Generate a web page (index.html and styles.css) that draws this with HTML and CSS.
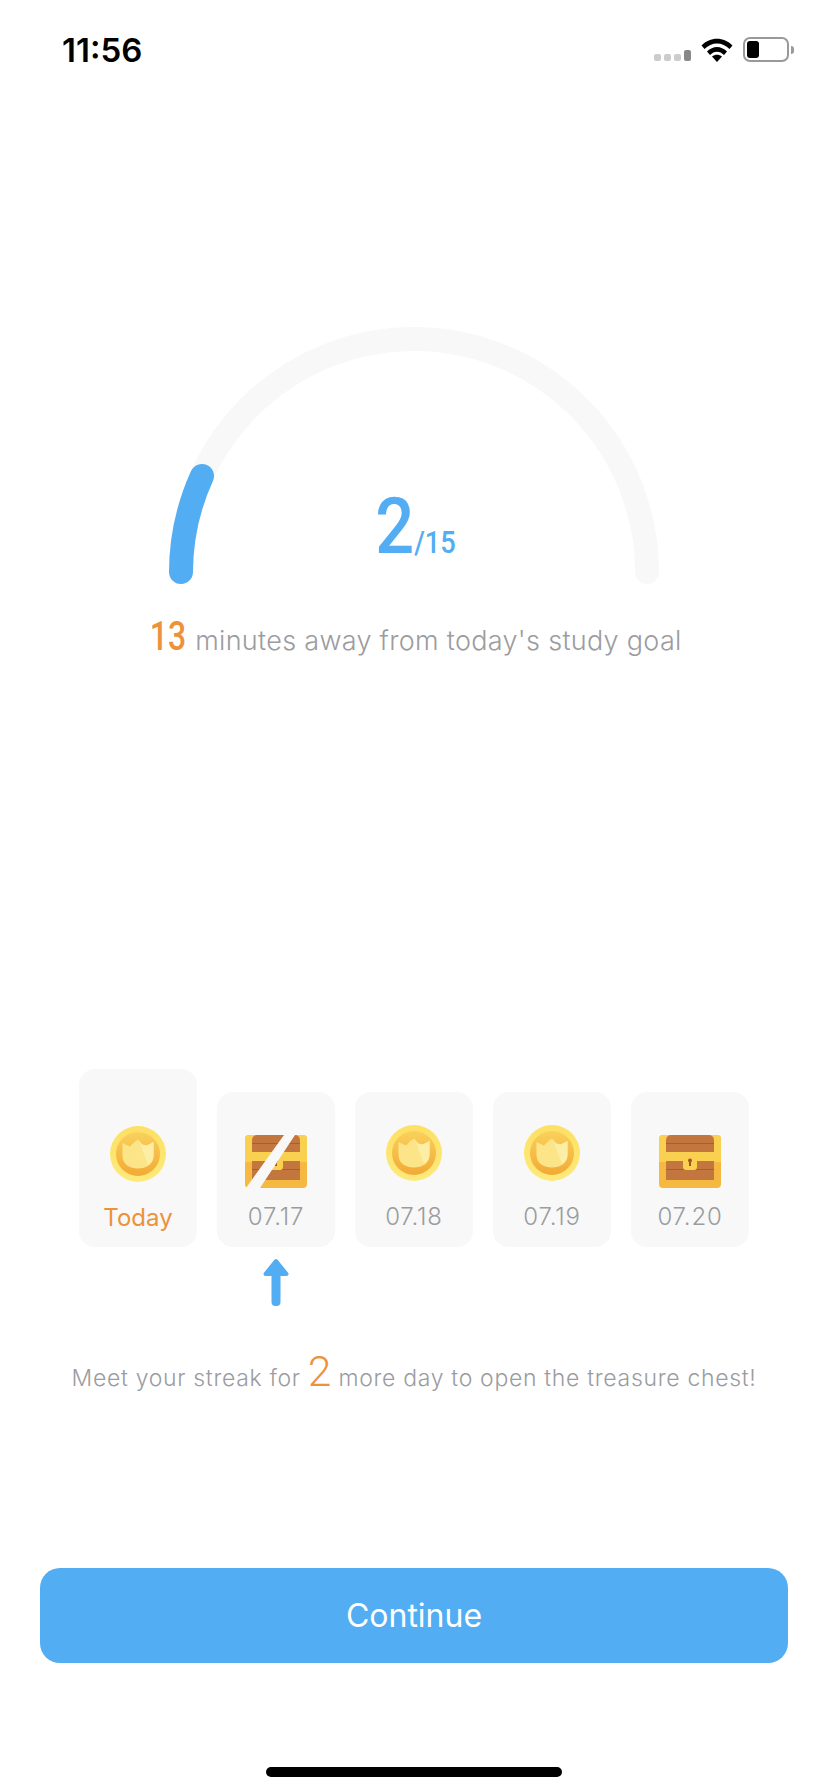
FILE: index.html
```html
<!DOCTYPE html>
<html lang="en">
<head>
    <meta charset="UTF-8">
    <meta name="viewport" content="width=device-width, initial-scale=1.0">
    <title>Study Goal</title>
    <link rel="stylesheet" href="styles.css">
</head>
<body>

    <svg class="defs" width="0" height="0">
        <defs>
            <linearGradient id="coinRim" x1="0" y1="0" x2="0" y2="1">
                <stop offset="0" stop-color="#fde063"/>
                <stop offset="1" stop-color="#fdea7c"/>
            </linearGradient>
            <linearGradient id="coinFace" x1="0" y1="0" x2="0" y2="1">
                <stop offset="0" stop-color="#f9d15c"/>
                <stop offset="1" stop-color="#f3a935"/>
            </linearGradient>
            <symbol id="coin" viewBox="0 0 56 56">
                <circle cx="28" cy="28" r="28" fill="url(#coinRim)"/>
                <circle cx="28" cy="28" r="22" fill="url(#coinFace)"/>
                <path d="M12.5 17 L20 20.5 L24 16.5 L28 13.5 L32 18.5 L37 19.5 L43.5 16 L43.5 30 C43.5 38.5 36 42.5 28 42.5 C20 42.5 12.5 38.5 12.5 30 Z" fill="#fbe588"/>
                <path d="M29 14.5 L32 18.5 L37 19.5 L43.5 16 L43.5 30 C43.5 34 41 37 38 39 Z" fill="#fdeea6"/>
            </symbol>
            <symbol id="chest" viewBox="0 0 62 53">
                <rect width="62" height="53" rx="4" fill="#f5b840"/>
                <path d="M0 4 a4 4 0 0 1 4 -4 H58 a4 4 0 0 1 4 4 V27 H0 Z" fill="#f9d04f"/>
                <path d="M7 17 V5 a5 5 0 0 1 5 -5 H50 a5 5 0 0 1 5 5 V17 Z" fill="#c4763f"/>
                <rect x="7" y="26" width="48" height="19" fill="#c4763f"/>
                <rect x="7" y="8" width="48" height="1" fill="#a5602f"/>
                <rect x="7" y="34" width="48" height="1" fill="#a5602f"/>
                <rect x="24" y="22" width="14" height="13" rx="3" fill="#f9d04f"/>
                <circle cx="31" cy="25.5" r="2" fill="#a5542a"/>
                <rect x="30" y="26" width="2" height="5" fill="#a5542a"/>
            </symbol>
        </defs>
    </svg>

    <div class="page">
        <div class="status-bar">
            <span class="clock">11:56</span>
            <div class="status-icons">
                <div class="signal">
                    <i></i><i></i><i></i><i class="on"></i>
                </div>
                <svg class="wifi" width="32" height="24" viewBox="0 0 32 24">
                    <path d="M0.5 7.5 C9 -1.5 23 -1.5 31.5 7.5 L28.5 11 C21.5 3.5 10.5 3.5 3.5 11 Z" fill="#000"/>
                    <path d="M6 13.5 C12 7.5 20 7.5 26 13.5 L23 17 C19 12.5 13 12.5 9 17 Z" fill="#000"/>
                    <path d="M11 18.5 C14 16 18 16 21 18.5 L16 24 Z" fill="#000"/>
                </svg>
                <div class="battery">
                    <div class="battery-body"><div class="battery-level"></div></div>
                    <div class="battery-cap"></div>
                </div>
            </div>
        </div>

        <div class="gauge">
            <svg class="gauge-arc" width="490" height="264" viewBox="0 0 490 264">
                <path class="track" d="M12 251 A233 233 0 0 1 478 251"/>
                <path class="fill" d="M12 251 A233 233 0 0 1 33 155"/>
            </svg>
            <div class="gauge-count"><span class="count-now">2</span><span class="count-total">/15</span></div>
        </div>

        <p class="goal"><span class="goal-num">13</span> minutes away from today's study goal</p>

        <div class="days">
            <div class="day today">
                <svg class="coin"><use href="#coin"/></svg>
                <span class="day-label">Today</span>
            </div>
            <div class="day">
                <svg class="chest" viewBox="0 0 62 53">
                    <use href="#chest" width="62" height="53"/>
                    <polygon points="39,0 50,0 15,53 1,53" fill="#f8f8f8"/>
                </svg>
                <span class="day-label">07.17</span>
            </div>
            <div class="day">
                <svg class="coin"><use href="#coin"/></svg>
                <span class="day-label">07.18</span>
            </div>
            <div class="day">
                <svg class="coin"><use href="#coin"/></svg>
                <span class="day-label">07.19</span>
            </div>
            <div class="day">
                <svg class="chest" viewBox="0 0 62 53"><use href="#chest" width="62" height="53"/></svg>
                <span class="day-label">07.20</span>
            </div>
        </div>

        <div class="pointer">
            <svg width="26" height="48" viewBox="0 0 26 48">
                <path d="M13 3 L23.5 16 H2.5 Z" fill="#52adf3" stroke="#52adf3" stroke-width="4" stroke-linejoin="round"/>
                <rect x="8.5" y="14" width="9" height="34" rx="4" fill="#52adf3"/>
            </svg>
        </div>

        <p class="streak">Meet your streak for <span class="streak-num">2</span> more day to open the treasure chest!</p>

        <button class="continue">Continue</button>

        <div class="home-bar"></div>
    </div>

</body>
</html>
```

FILE: styles.css
```css
* {
    box-sizing: border-box;
}

body {
    margin: 0;
    background: #fff;
    font-family: Inter, "Noto Sans", sans-serif;
}

.defs {
    position: absolute;
}

.page {
    width: 828px;
    height: 1792px;
    display: flex;
    flex-direction: column;
    align-items: center;
}

.status-bar {
    width: 100%;
    height: 100px;
    padding: 30px 34px 0 62px;
    display: flex;
    justify-content: space-between;
    align-items: flex-start;
}

.clock {
    font-size: 33px;
    line-height: 40px;
    font-weight: 600;
    color: #000;
}

.status-icons {
    display: flex;
    align-items: flex-end;
    padding-top: 7px;
}

.signal {
    display: flex;
    align-items: flex-end;
    gap: 3px;
    margin-right: 10px;
    padding-bottom: 1px;
}

.signal i {
    width: 7px;
    height: 7px;
    border-radius: 2px;
    background: #ccc;
}

.signal i.on {
    height: 11px;
    background: #888;
}

.wifi {
    margin-right: 10px;
}

.battery {
    display: flex;
    align-items: center;
}

.battery-body {
    width: 46px;
    height: 25px;
    border: 2px solid #999;
    border-radius: 7px;
    padding: 2px;
}

.battery-level {
    width: 12px;
    height: 100%;
    background: #000;
    border-radius: 3px;
}

.battery-cap {
    width: 3px;
    height: 8px;
    margin-left: 2px;
    background: #999;
    border-radius: 0 3px 3px 0;
}

.gauge {
    position: relative;
    margin-top: 221px;
    width: 490px;
    height: 264px;
}

.gauge-arc {
    display: block;
}

.gauge-arc path {
    fill: none;
    stroke-width: 24;
    stroke-linecap: round;
}

.track {
    stroke: #f8f8f8;
}

.fill {
    stroke: #52adf3;
}

.gauge-count {
    position: absolute;
    left: -3px;
    right: 0;
    top: 156px;
    display: flex;
    justify-content: center;
    align-items: baseline;
    font-family: Roboto, sans-serif;
    font-weight: 500;
    color: #52adf3;
}

.count-now {
    display: inline-block;
    font-size: 78px;
    line-height: 100px;
    width: 38px;
    text-align: center;
    transform: scaleX(0.88);
}

.count-total {
    display: inline-block;
    font-size: 32px;
    width: 42px;
    text-align: center;
    transform: scaleX(0.85);
}

.goal {
    margin: 28px 0 0;
    font-size: 27px;
    line-height: 48px;
    font-weight: 300;
    letter-spacing: 0.3px;
    color: #9b9c9f;
    white-space: nowrap;
}

.goal-num {
    display: inline-block;
    width: 38px;
    margin-right: 3px;
    font-family: Roboto, sans-serif;
    font-size: 40px;
    font-weight: 500;
    letter-spacing: 0;
    color: #ec923a;
    transform: scaleX(0.8);
}

.days {
    margin-top: 404px;
    width: 670px;
    display: flex;
    justify-content: space-between;
    align-items: flex-end;
}

.day {
    width: 118px;
    height: 155px;
    padding-top: 33px;
    background: #f8f8f8;
    border-radius: 16px;
    display: flex;
    flex-direction: column;
    align-items: center;
}

.day.today {
    height: 178px;
    padding-top: 57px;
}

.coin {
    width: 56px;
    height: 56px;
}

.chest {
    width: 62px;
    height: 53px;
    margin-top: 10px;
}

.day-label {
    margin-top: 21px;
    font-size: 24px;
    line-height: 30px;
    font-weight: 300;
    letter-spacing: 0.8px;
    color: #9b9c9f;
}

.chest + .day-label {
    margin-top: 14px;
}

.today .day-label {
    font-weight: 400;
    letter-spacing: 0;
    color: #ec923a;
}

.pointer {
    width: 670px;
    margin-top: 11px;
    padding-left: 184px;
    line-height: 0;
}

.streak {
    margin: 43px 0 0;
    font-size: 23px;
    line-height: 46px;
    font-weight: 300;
    letter-spacing: 0.68px;
    color: #9b9c9f;
    white-space: nowrap;
}

.streak-num {
    font-family: Roboto, sans-serif;
    font-size: 42px;
    font-weight: 300;
    letter-spacing: 0;
    color: #ec923a;
}

.continue {
    margin-top: 167px;
    width: 748px;
    height: 95px;
    border: none;
    border-radius: 20px;
    background: #52adf3;
    color: #fff;
    font-family: inherit;
    font-size: 32px;
}

.home-bar {
    margin-top: 104px;
    width: 296px;
    height: 10px;
    border-radius: 5px;
    background: #000;
}
```
